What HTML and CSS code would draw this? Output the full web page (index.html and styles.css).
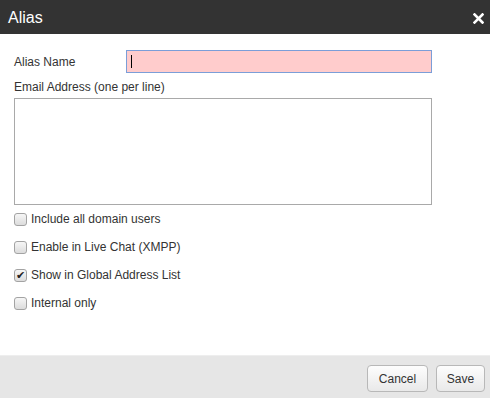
FILE: index.html
```html
<!DOCTYPE html>
<html lang="en">
<head>
    <meta charset="UTF-8">
    <title>Alias</title>
    <link rel="stylesheet" href="styles.css">
</head>
<body>
    <div class="dialog">
        <div class="dialog-header">
            <h1>Alias</h1>
            <button class="close-btn" aria-label="Close">
                <svg width="11" height="11" viewBox="0 0 11 11">
                    <path d="M1.5 1.5 L9.5 9.5 M9.5 1.5 L1.5 9.5" stroke="#fff" stroke-width="2.6" stroke-linecap="square"/>
                </svg>
            </button>
        </div>

        <div class="dialog-body">
            <div class="field-row">
                <label class="field-label" for="aliasName">Alias Name</label>
                <div class="input-wrap">
                    <input type="text" id="aliasName" class="alias-input">
                    <span class="caret"></span>
                </div>
            </div>

            <label class="block-label" for="emails">Email Address (one per line)</label>
            <textarea id="emails" class="email-box"></textarea>

            <ul class="options">
                <li><span class="check"></span>Include all domain users</li>
                <li><span class="check"></span>Enable in Live Chat (XMPP)</li>
                <li><span class="check checked"></span>Show in Global Address List</li>
                <li><span class="check"></span>Internal only</li>
            </ul>
        </div>

        <div class="dialog-footer">
            <button class="btn btn-cancel">Cancel</button>
            <button class="btn btn-save">Save</button>
        </div>
    </div>
</body>
</html>
```

FILE: styles.css
```css
* {
    margin: 0;
    padding: 0;
    box-sizing: border-box;
}

body {
    font-family: 'Liberation Sans', Arial, sans-serif;
    font-size: 12px;
    color: #333;
    background-color: #fff;
}

.dialog {
    width: 490px;
    height: 398px;
    display: flex;
    flex-direction: column;
}

.dialog-header {
    height: 34px;
    background-color: #333;
    display: flex;
    align-items: center;
    justify-content: space-between;
    padding: 0 6px 0 8px;
}

.dialog-header h1 {
    color: #fff;
    font-size: 16px;
    font-weight: 400;
    padding-top: 1px;
}

.close-btn {
    background: none;
    border: none;
    width: 11px;
    height: 11px;
    margin-top: 2px;
}

.close-btn svg {
    display: block;
}

.dialog-body {
    flex: 1;
    padding: 16px 14px 0;
}

.field-row {
    display: flex;
    align-items: center;
}

.field-label {
    width: 112px;
}

.input-wrap {
    position: relative;
}

.alias-input {
    display: block;
    width: 306px;
    height: 23px;
    background-color: #ffcccc;
    border: 1px solid #7b9ed8;
    outline: none;
    font-family: inherit;
    font-size: 12px;
    padding: 0 4px;
}

.caret {
    position: absolute;
    left: 5px;
    top: 5px;
    width: 1px;
    height: 13px;
    background-color: #000;
}

.block-label {
    display: block;
    margin-top: 7px;
    line-height: 14px;
}

.email-box {
    display: block;
    width: 418px;
    height: 107px;
    margin-top: 4px;
    border: 1px solid #a9a9a9;
    resize: none;
    outline: none;
}

.options {
    list-style: none;
}

.options li {
    height: 28px;
    display: flex;
    align-items: center;
}

.check {
    width: 13px;
    height: 13px;
    margin-right: 4px;
    border: 1px solid #a3a3a3;
    border-radius: 3px;
    background: linear-gradient(#f6f6f6, #dcdcdc);
    display: flex;
    align-items: center;
    justify-content: center;
}

.check.checked::after {
    content: "\2714";
    font-family: 'DejaVu Sans', sans-serif;
    font-size: 11px;
    line-height: 1;
    color: #222;
}

.dialog-footer {
    height: 43px;
    background-color: #e6e6e6;
    border-top: 1px solid #eeeeee;
    display: flex;
    justify-content: flex-end;
    align-items: flex-start;
    gap: 8px;
    padding: 9px 5px 0 0;
}

.btn {
    height: 27px;
    border: 1px solid #b8b8b8;
    border-radius: 4px;
    background: linear-gradient(#fdfdfd, #e9e9e9);
    font-family: inherit;
    font-size: 12px;
    color: #333;
}

.btn-cancel {
    width: 61px;
}

.btn-save {
    width: 49px;
}
```
